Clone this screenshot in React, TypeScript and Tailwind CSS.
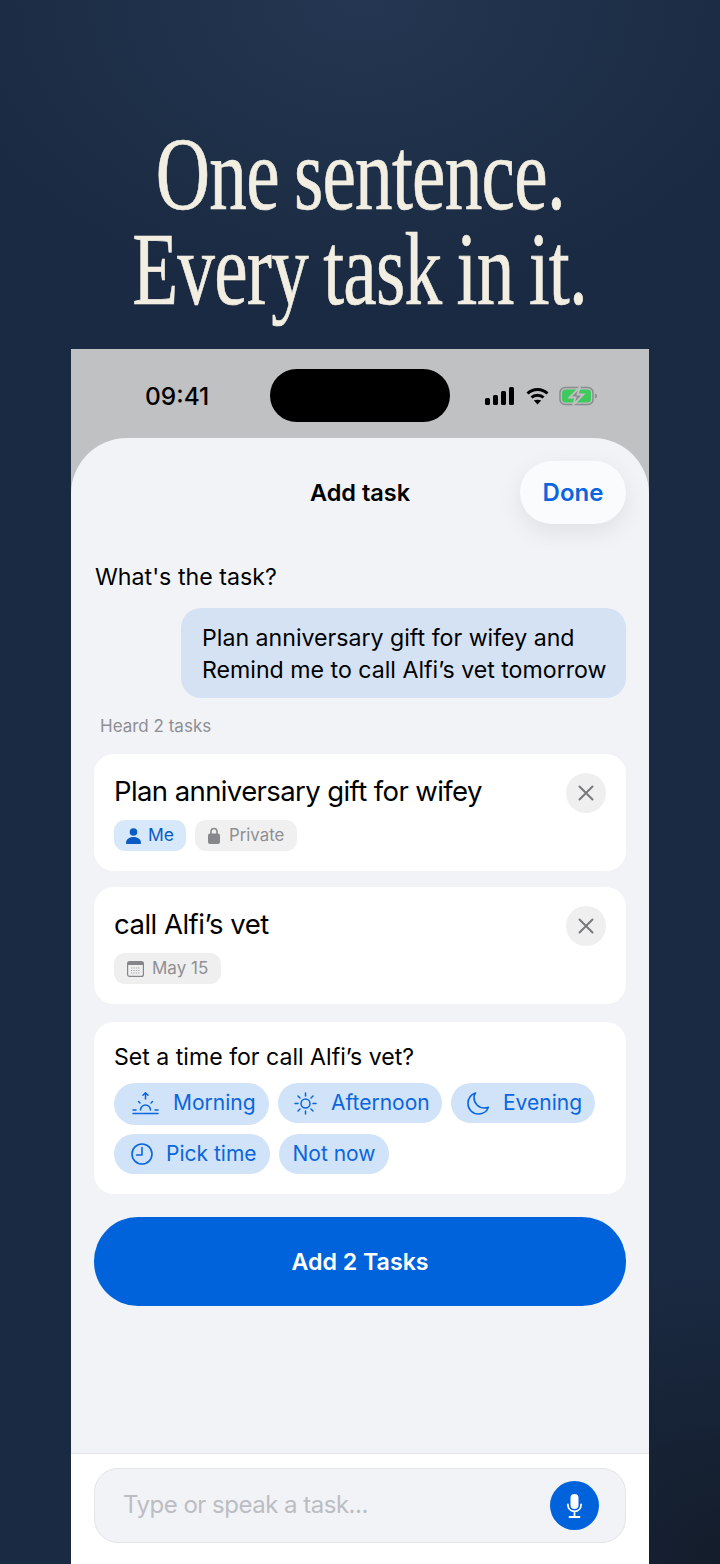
const SANS = "font-['Inter','Liberation_Sans',sans-serif]";

function SignalIcon() {
  return (
    <svg width="29" height="18" viewBox="0 0 29 18" fill="#000">
      <rect x="0" y="11" width="5" height="7" rx="1.5" />
      <rect x="8" y="8" width="5" height="10" rx="1.5" />
      <rect x="16" y="4" width="5" height="14" rx="1.5" />
      <rect x="24" y="0" width="5" height="18" rx="1.5" />
    </svg>
  );
}

function WifiIcon() {
  return (
    <svg width="23" height="18" viewBox="0 0 23 18" fill="none" stroke="#000" strokeWidth="3">
      <path d="M1.5 6.5C7 1 16 1 21.500 6.500" />
      <path d="M5.500 10.500C8.500 7.500 14.500 7.500 17.500 10.500" />
      <path d="M11.500 17.500L7.800 13.600C9.800 12.300 13.200 12.300 15.200 13.600Z" fill="#000" stroke="none" />
    </svg>
  );
}

function BatteryIcon() {
  return (
    <svg width="39" height="20" viewBox="0 0 39 20" fill="none">
      <rect x="1" y="1.500" width="33" height="17" rx="5" stroke="#8a8b8c" strokeWidth="1.500" />
      <rect x="3" y="3.500" width="29" height="13" rx="3.500" fill="#3dc95c" />
      <path d="M36 7.500c1.500.5 2 1.500 2 2.500s-.5 2-2 2.500z" fill="#8a8b8c" />
      <path d="M21 1L10.500 11.500H16.500L14 19L24.500 8.500H18.500Z" fill="#8a8b8c" stroke="#c0c1c3" strokeWidth="1.800" />
    </svg>
  );
}

function CloseIcon() {
  return (
    <svg width="16" height="16" viewBox="0 0 16 16" fill="none" stroke="#77797c" strokeWidth="2" strokeLinecap="round">
      <path d="M1.500 1.500L14.500 14.500M14.500 1.500L1.500 14.500" />
    </svg>
  );
}

function PersonIcon() {
  return (
    <svg width="15" height="16" viewBox="0 0 15 16" fill="#0a5bc4">
      <circle cx="7.500" cy="4" r="3.800" />
      <path d="M0 15c0-3.500 3-6 7.500-6s7.500 2.500 7.500 6c0 .6-.4 1-1 1H1c-.6 0-1-.4-1-1z" />
    </svg>
  );
}

function LockIcon() {
  return (
    <svg width="12" height="17" viewBox="0 0 12 17" fill="#87888b">
      <path d="M3 7V4.500a3 3 0 0 1 6 0V7" fill="none" stroke="#87888b" strokeWidth="1.600" />
      <rect x="0" y="6.500" width="12" height="10.500" rx="2" />
    </svg>
  );
}

function CalendarIcon() {
  return (
    <svg width="17" height="16" viewBox="0 0 17 16" fill="none">
      <rect x="0.600" y="0.600" width="15.800" height="14.800" rx="2" stroke="#85868a" strokeWidth="1.200" />
      <rect x="1" y="1" width="15" height="3" fill="#85868a" />
      <path d="M4 7h9M4 9.500h9M4 12h9" stroke="#a3a4a8" strokeWidth="1.200" strokeDasharray="1.300 1.100" />
    </svg>
  );
}

function SunriseIcon() {
  return (
    <svg width="27" height="23" viewBox="0 0 27 23" fill="none" stroke="#0a66de" strokeWidth="1.500" strokeLinecap="round">
      <path d="M13.500 7V1M11 3.200L13.500 .8L16 3.200" />
      <path d="M8.500 18a5 5 0 0 1 10 0" />
      <path d="M6.500 9.500L8 11M20.500 9.500L19 11M1 18h3M23 18h3" />
      <path d="M1 21.500h25" />
    </svg>
  );
}

function SunIcon() {
  return (
    <svg width="23" height="23" viewBox="0 0 23 23" fill="none" stroke="#0a66de" strokeWidth="1.500" strokeLinecap="round">
      <circle cx="11.500" cy="11.500" r="4.500" />
      <path d="M11.500 1v3M11.500 19v3M1 11.500h3M19 11.500h3M4 4l2 2M17 17l2 2M19 4l-2 2M6 17l-2 2" />
    </svg>
  );
}

function MoonIcon() {
  return (
    <svg width="22" height="23" viewBox="0 0 22 23" fill="none" stroke="#0a66de" strokeWidth="1.600" strokeLinejoin="round">
      <path d="M8.500 1C4 2.500 1 6.500 1 11.500 1 17.500 5.500 22 11.500 22c4.500 0 8.500-2.800 9.800-6.800-1.200.5-2.400.8-3.800.8C11.500 16 7 11.500 7 5.500 7 4 7.500 2.300 8.500 1z" />
    </svg>
  );
}

function ClockIcon() {
  return (
    <svg width="22" height="22" viewBox="0 0 22 22" fill="none" stroke="#0a66de" strokeWidth="1.600" strokeLinecap="round" strokeLinejoin="round">
      <circle cx="11" cy="11" r="10" />
      <path d="M11 4.500V12H5.500" />
    </svg>
  );
}

function MicIcon() {
  return (
    <svg width="15" height="24" viewBox="0 0 15 24" fill="none" stroke="#fff" strokeWidth="1.800" strokeLinecap="round">
      <rect x="3.500" y="0" width="8" height="15" rx="4" fill="#fff" stroke="none" />
      <path d="M.9 10.500c0 4 2.800 6.800 6.600 6.800s6.600-2.800 6.600-6.800M7.500 17.500V22M2.500 23h10" />
    </svg>
  );
}

function TimeChip({ icon, label, className }: { icon?: React.ReactNode; label: string; className: string }) {
  return (
    <div className={`flex items-center rounded-full bg-[#d0e3f8] text-[21px] text-[#0a66de] ${className}`}>
      {icon}
      <span>{label}</span>
    </div>
  );
}

export default function App() {
  return (
    <div className={`flex h-[1564px] w-[720px] flex-col overflow-hidden bg-[radial-gradient(ellipse_420px_300px_at_50%_0%,#243651,transparent),radial-gradient(ellipse_300px_300px_at_100%_100%,#131c2a,transparent)] bg-[#1a2a42] ${SANS}`}>
      <div className="flex h-[349px] shrink-0 flex-col items-center pt-[127px] font-['Liberation_Serif',serif] text-[103px] leading-[95px] tracking-[-1px] [word-spacing:-4px] text-[#f2eee1] [-webkit-text-stroke:0.7px_#f2eee1]">
        <div className="scale-x-[0.73] whitespace-nowrap">One sentence.</div>
        <div className="scale-x-[0.73] whitespace-nowrap">Every task in it.</div>
      </div>

      <div className="mx-[71px] flex min-h-0 flex-1 flex-col bg-[#c0c1c3]">
        <div className="flex h-[89px] shrink-0 items-start pl-[74px]">
          <div className="mt-[32px] w-[125px] text-[24.500px] leading-[30px] font-[550] text-black">09:41</div>
          <div className="mt-[20px] h-[53px] w-[180px] rounded-full bg-black" />
          <div className="mt-[37px] ml-[35px] flex items-center">
            <SignalIcon />
            <div className="ml-[12px] flex">
              <WifiIcon />
            </div>
            <div className="ml-[10px] flex">
              <BatteryIcon />
            </div>
          </div>
        </div>

        <div className="flex min-h-0 flex-1 flex-col overflow-hidden rounded-t-[56px] bg-[#f1f3f7]">
          <div className="flex flex-1 flex-col px-[23px]">
            <div className="mt-[23px] grid h-[63px] grid-cols-[1fr_auto_1fr] items-center">
              <div />
              <div className="text-[23.500px] font-semibold text-black">Add task</div>
              <div className="flex h-[63px] w-[106px] items-center justify-center justify-self-end rounded-full bg-[#fafbfd] pt-[1px] text-[24px] font-semibold text-[#0a66de] shadow-[0_8px_24px_rgba(0,0,0,0.08)]">
                Done
              </div>
            </div>

            <div className="mt-[37px] ml-[1px] text-[23.200px] leading-[32px] text-black">What's the task?</div>

            <div className="mt-[15px] w-[445px] self-end rounded-[20px] bg-[#d5e2f4] pt-[14px] pr-[19px] pb-[12px] pl-[21px] text-[23.150px] leading-[32px] whitespace-nowrap text-black">
              Plan anniversary gift for wifey and
              <br />
              Remind me to call Alfi’s vet tomorrow
            </div>

            <div className="mt-[16px] ml-[6px] text-[17px] leading-[24px] text-[#8e8e93]">Heard 2 tasks</div>

            <div className="mt-[16px] flex h-[117px] justify-between rounded-[20px] bg-white px-[20px] pt-[19px]">
              <div>
                <div className="text-[27.500px] leading-[36px] tracking-[-0.6px] text-black">Plan anniversary gift for wifey</div>
                <div className="mt-[11px] flex gap-[9px]">
                  <div className="flex h-[31px] w-[72px] items-center justify-center gap-[7px] rounded-[11px] bg-[#d6e8fa] text-[17.500px] text-[#0a5bc4]">
                    <PersonIcon />
                    <span>Me</span>
                  </div>
                  <div className="flex h-[31px] w-[102px] items-center gap-[9px] rounded-[11px] bg-[#f0f0f0] pl-[13px] text-[16.800px] text-[#8e8f92]">
                    <LockIcon />
                    <span>Private</span>
                  </div>
                </div>
              </div>
              <div className="flex h-[40px] w-[40px] items-center justify-center rounded-full bg-[#efefef]">
                <CloseIcon />
              </div>
            </div>

            <div className="mt-[16px] flex h-[117px] justify-between rounded-[20px] bg-white px-[20px] pt-[19px]">
              <div>
                <div className="text-[27.500px] leading-[36px] tracking-[-0.5px] text-black">call Alfi’s vet</div>
                <div className="mt-[11px] flex">
                  <div className="flex h-[31px] w-[107px] items-center gap-[8px] rounded-[11px] bg-[#efefef] pl-[13px] text-[17px] text-[#8e8f92]">
                    <CalendarIcon />
                    <span>May 15</span>
                  </div>
                </div>
              </div>
              <div className="flex h-[40px] w-[40px] items-center justify-center rounded-full bg-[#efefef]">
                <CloseIcon />
              </div>
            </div>

            <div className="mt-[18px] h-[172px] rounded-[20px] bg-white px-[20px] pt-[19px]">
              <div className="text-[23.100px] leading-[32px] text-black">Set a time for call Alfi’s vet?</div>
              <div className="mt-[10px] flex flex-wrap items-start gap-[9px]">
                <TimeChip icon={<SunriseIcon />} label="Morning" className="h-[42px] w-[155px] gap-[14px] pb-[2px] pl-[18px]" />
                <TimeChip icon={<SunIcon />} label="Afternoon" className="h-[40px] w-[164px] gap-[14px] pl-[16px]" />
                <TimeChip icon={<MoonIcon />} label="Evening" className="h-[40px] w-[144px] gap-[14px] pl-[16px]" />
                <TimeChip icon={<ClockIcon />} label="Pick time" className="h-[40px] w-[156px] gap-[13px] pl-[17px]" />
                <TimeChip label="Not now" className="h-[40px] w-[110px] justify-center" />
              </div>
            </div>

            <div className="mt-[23px] flex h-[89px] items-center justify-center rounded-[44px] bg-[#0063dc] pt-[1px] text-[23.200px] font-semibold text-white">
              Add 2 Tasks
            </div>
          </div>

          <div className="flex h-[111px] shrink-0 flex-col border-t border-[#e2e3e6] bg-white px-[23px] pt-[14px]">
            <div className="flex h-[75px] items-center justify-between rounded-[24px] border border-[#e4e5e8] bg-[#f1f3f7] pr-[26px] pl-[28px]">
              <span className="mb-[2px] text-[24px] tracking-[-0.5px] text-[#bcbdc2]">Type or speak a task...</span>
              <div className="flex h-[49px] w-[49px] items-center justify-center rounded-full bg-[#0063dc]">
                <MicIcon />
              </div>
            </div>
          </div>
        </div>
      </div>
    </div>
  );
}
